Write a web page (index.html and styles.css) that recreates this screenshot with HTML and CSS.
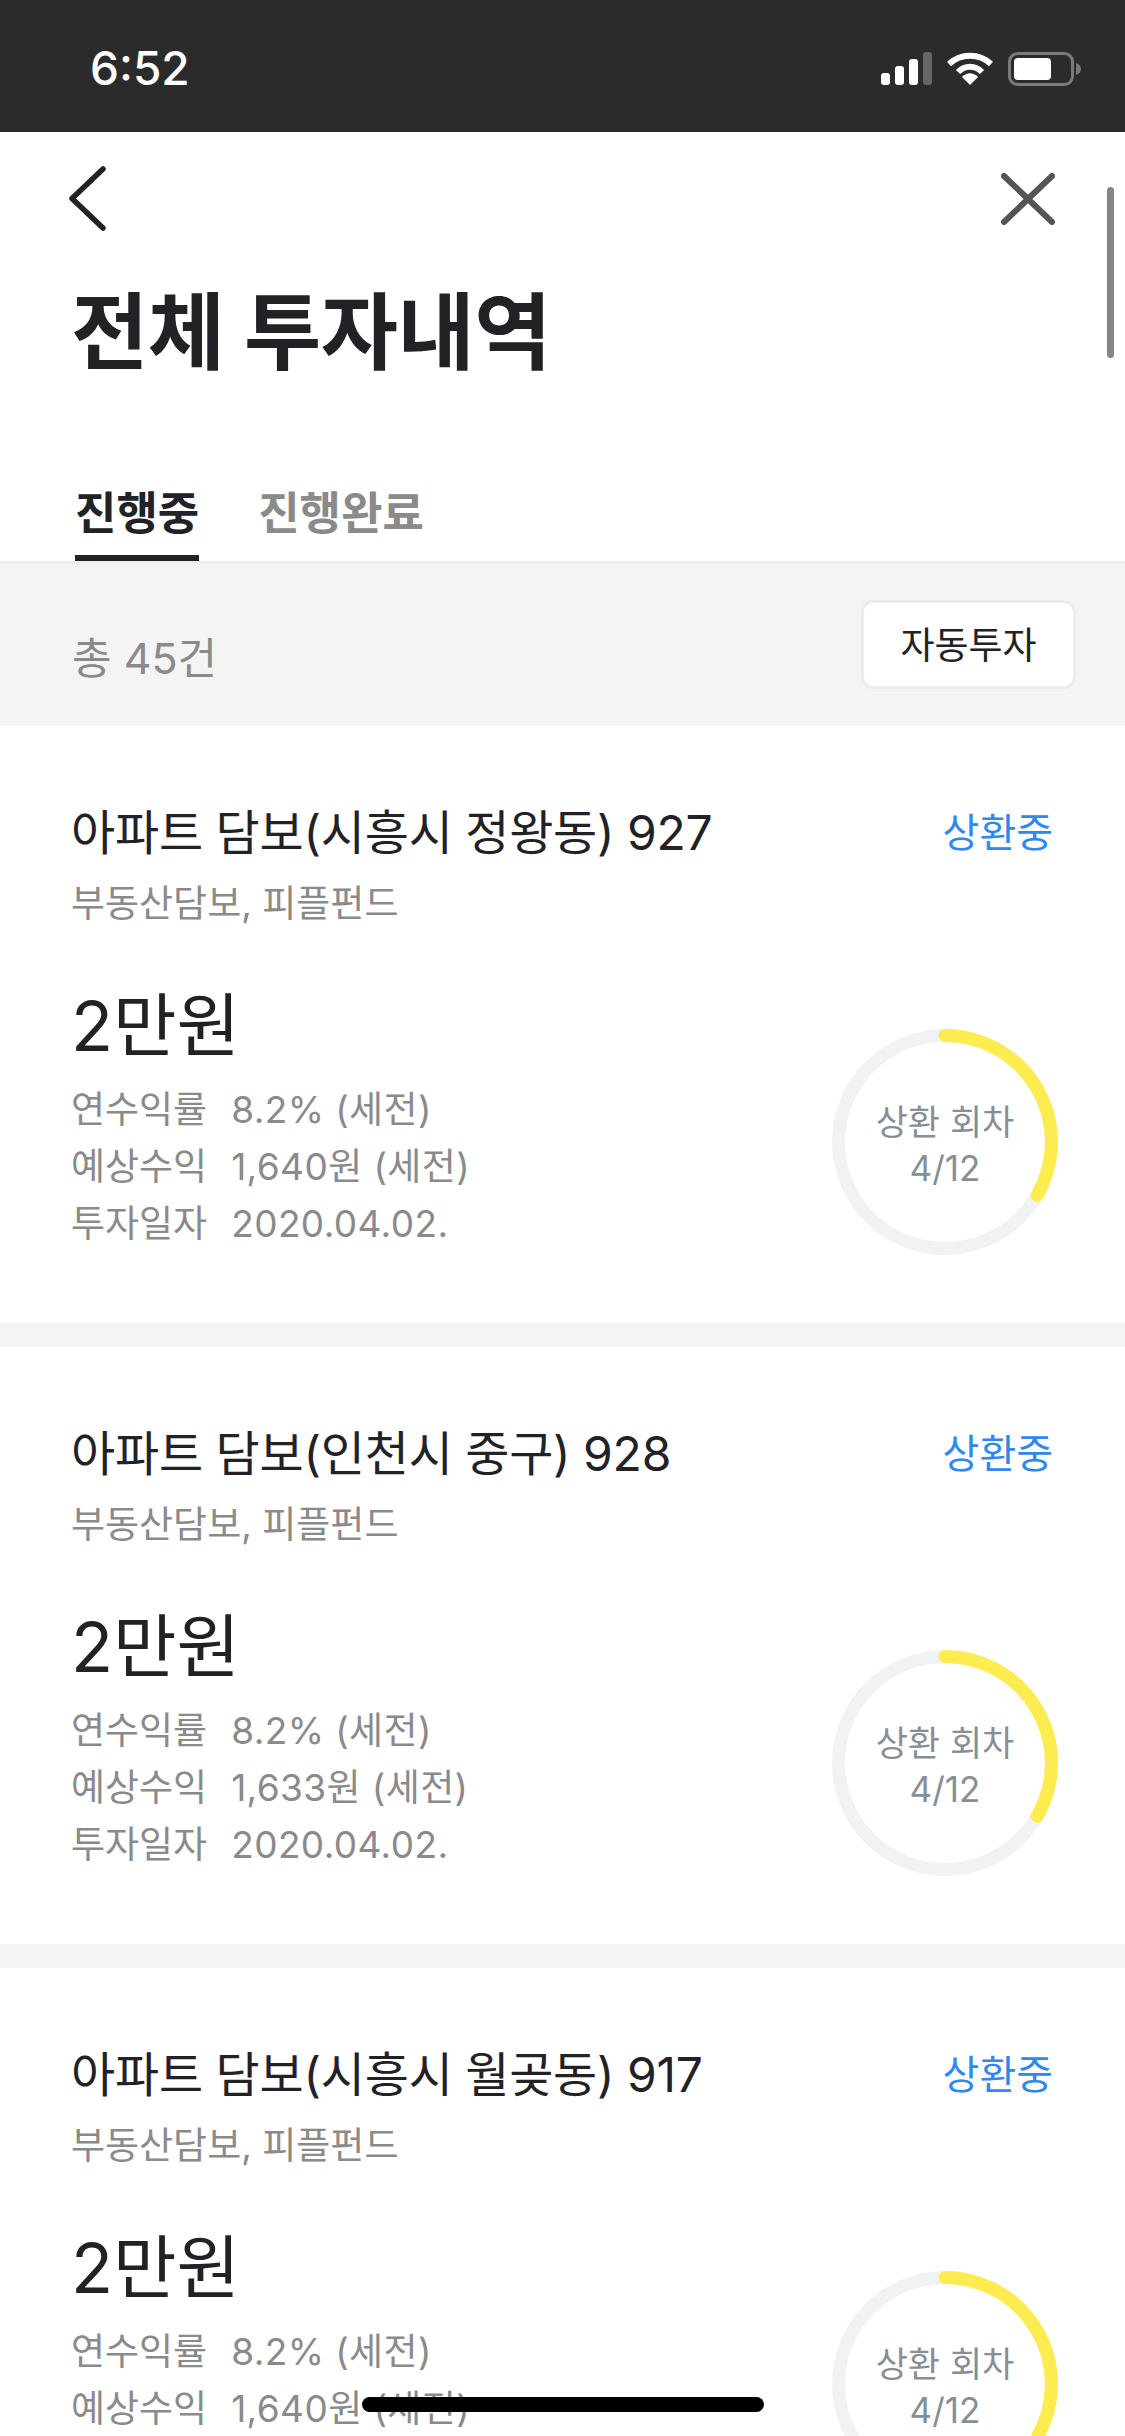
FILE: index.html
```html
<!DOCTYPE html>
<html lang="ko">
<head>
  <meta charset="UTF-8" />
  <meta name="viewport" content="width=device-width, initial-scale=1.0"/>
  <title>전체 투자내역</title>
  <link rel="stylesheet" href="styles.css">
</head>
<body>

<div class="statusbar">
  <span class="time">6:52</span>
  <div class="status-icons">
    <svg class="signal" width="51" height="33" viewBox="0 0 51 33">
      <rect x="0" y="21" width="9" height="12" rx="3" fill="#fff"/>
      <rect x="14" y="14" width="9" height="19" rx="3" fill="#fff"/>
      <rect x="28" y="7" width="9" height="26" rx="3" fill="#fff"/>
      <rect x="42" y="0" width="9" height="33" rx="3" fill="#666"/>
    </svg>
    <svg class="wifi" width="46" height="33" viewBox="0 0 46 33">
      <path d="M2 12 C14 1 32 1 44 12" fill="none" stroke="#fff" stroke-width="6"/>
      <path d="M11 20 C18 13 28 13 35 20" fill="none" stroke="#fff" stroke-width="6"/>
      <path d="M15 25 C20 20 26 20 31 25 L23 33 Z" fill="#fff"/>
    </svg>
    <svg class="battery" width="74" height="34" viewBox="0 0 74 34">
      <rect x="1.500" y="1.500" width="63" height="31" rx="8" fill="none" stroke="#7a7a7a" stroke-width="3"/>
      <rect x="6" y="6" width="37" height="22" rx="4" fill="#fff"/>
      <path d="M68 11 C71 12 73 14 73 17 C73 20 71 22 68 23 Z" fill="#7a7a7a"/>
    </svg>
  </div>
</div>

<div class="topnav">
  <svg width="37" height="65" viewBox="0 0 37 65">
    <path d="M34 3 L3 32.500 L34 62" fill="none" stroke="#222226" stroke-width="5.500" stroke-linecap="round" stroke-linejoin="round"/>
  </svg>
  <svg width="54" height="52" viewBox="0 0 54 52">
    <path d="M3 3 L51 49 M51 3 L3 49" fill="none" stroke="#555" stroke-width="6" stroke-linecap="round"/>
  </svg>
</div>

<h1 class="page-title">전체 투자내역</h1>

<div class="tabs">
  <div class="tab active">진행중</div>
  <div class="tab">진행완료</div>
</div>

<div class="summary">
  <span class="total">총 45건</span>
  <button class="auto-btn">자동투자</button>
</div>

<div class="cards">
  <div class="card">
    <div class="card-head">
      <span class="card-title">아파트 담보(시흥시 정왕동) 927</span>
      <span class="card-state">상환중</span>
    </div>
    <div class="card-sub">부동산담보, 피플펀드</div>
    <div class="card-body">
      <div>
        <div class="amount">2만원</div>
        <div class="info"><span>연수익률</span><span class="value">8.2% (세전)</span></div>
        <div class="info"><span>예상수익</span><span class="value">1,640원 (세전)</span></div>
        <div class="info"><span>투자일자</span><span class="value">2020.04.02.</span></div>
      </div>
      <div class="ring">
        <svg width="226" height="226" viewBox="0 0 226 226">
          <circle cx="113" cy="113" r="106.500" fill="none" stroke="#f1f2f4" stroke-width="13"/>
          <path d="M113 6.500 A106.500 106.500 0 0 1 205.200 166.200" fill="none" stroke="#fdec50" stroke-width="13" stroke-linecap="round"/>
        </svg>
        <div class="ring-text">상환 회차<br>4/12</div>
      </div>
    </div>
  </div>

  <div class="card">
    <div class="card-head">
      <span class="card-title">아파트 담보(인천시 중구) 928</span>
      <span class="card-state">상환중</span>
    </div>
    <div class="card-sub">부동산담보, 피플펀드</div>
    <div class="card-body">
      <div>
        <div class="amount">2만원</div>
        <div class="info"><span>연수익률</span><span class="value">8.2% (세전)</span></div>
        <div class="info"><span>예상수익</span><span class="value">1,633원 (세전)</span></div>
        <div class="info"><span>투자일자</span><span class="value">2020.04.02.</span></div>
      </div>
      <div class="ring">
        <svg width="226" height="226" viewBox="0 0 226 226">
          <circle cx="113" cy="113" r="106.500" fill="none" stroke="#f1f2f4" stroke-width="13"/>
          <path d="M113 6.500 A106.500 106.500 0 0 1 205.200 166.200" fill="none" stroke="#fdec50" stroke-width="13" stroke-linecap="round"/>
        </svg>
        <div class="ring-text">상환 회차<br>4/12</div>
      </div>
    </div>
  </div>

  <div class="card">
    <div class="card-head">
      <span class="card-title">아파트 담보(시흥시 월곶동) 917</span>
      <span class="card-state">상환중</span>
    </div>
    <div class="card-sub">부동산담보, 피플펀드</div>
    <div class="card-body">
      <div>
        <div class="amount">2만원</div>
        <div class="info"><span>연수익률</span><span class="value">8.2% (세전)</span></div>
        <div class="info"><span>예상수익</span><span class="value">1,640원 (세전)</span></div>
      </div>
      <div class="ring">
        <svg width="226" height="226" viewBox="0 0 226 226">
          <circle cx="113" cy="113" r="106.500" fill="none" stroke="#f1f2f4" stroke-width="13"/>
          <path d="M113 6.500 A106.500 106.500 0 0 1 205.200 166.200" fill="none" stroke="#fdec50" stroke-width="13" stroke-linecap="round"/>
        </svg>
        <div class="ring-text">상환 회차<br>4/12</div>
      </div>
    </div>
  </div>
</div>

<div class="scrollbar"></div>
<div class="home-bar"></div>

</body>
</html>
```

FILE: styles.css
```css
html, body {
  margin: 0;
  padding: 0;
}

body {
  position: relative;
  width: 1125px;
  height: 2436px;
  overflow: hidden;
  background-color: #fff;
  color: #222226;
  font-family: Inter, "Noto Sans CJK KR", sans-serif;
}

.statusbar {
  display: flex;
  justify-content: space-between;
  align-items: flex-start;
  height: 132px;
  padding: 0 43px 0 90px;
  background-color: #2b2b2b;
  box-sizing: border-box;
}

.time {
  margin-top: 41px;
  font-size: 46px;
  line-height: 54px;
  font-weight: 500;
  color: #fff;
}

.status-icons {
  display: flex;
  align-items: flex-start;
  gap: 15px;
  margin-top: 52px;
}

.topnav {
  display: flex;
  justify-content: space-between;
  align-items: center;
  height: 65px;
  padding: 34px 70px 0 69px;
}

.page-title {
  margin: 52px 0 0 71px;
  font-size: 84px;
  line-height: 100px;
  font-weight: 700;
  letter-spacing: -0.5px;
}

.tabs {
  display: flex;
  gap: 59px;
  height: 80px;
  margin-top: 98px;
  padding-left: 75px;
  border-bottom: 3px solid #efefef;
}

.tab {
  height: 74px;
  font-size: 45px;
  line-height: 66px;
  font-weight: 700;
  color: #8a8a8a;
}

.tab.active {
  color: #222226;
  border-bottom: 6px solid #222226;
}

.summary {
  display: flex;
  justify-content: space-between;
  align-items: flex-start;
  height: 162px;
  padding: 36px 49px 0 72px;
  background-color: #f4f4f5;
  box-sizing: border-box;
}

.total {
  margin-top: 28px;
  font-size: 43px;
  line-height: 60px;
  color: #8a8a8a;
}

.auto-btn {
  width: 215px;
  height: 89px;
  padding: 0 0 4px;
  background-color: #fff;
  border: 3px solid #ebecef;
  border-radius: 12px;
  font-family: inherit;
  font-size: 37px;
  color: #222226;
}

.cards {
  display: flex;
  flex-direction: column;
  gap: 24px;
  background-color: #f4f4f5;
}

.card {
  height: 597px;
  padding: 72px 72px 0 71px;
  background-color: #fff;
  box-sizing: border-box;
}

.card-head {
  display: flex;
  justify-content: space-between;
  align-items: center;
  height: 70px;
}

.card-title {
  font-size: 48px;
  line-height: 70px;
  letter-spacing: -0.2px;
  word-spacing: -0.7px;
}

.card-state {
  font-size: 40px;
  line-height: 70px;
  color: #2f87f0;
}

.card-sub {
  margin-top: 10px;
  font-size: 37px;
  line-height: 52px;
  color: #8a8a8a;
}

.card-body {
  display: flex;
  justify-content: space-between;
  align-items: flex-start;
  margin-top: 46px;
}

.amount {
  margin-bottom: 5px;
  font-size: 69px;
  line-height: 100px;
}

.info {
  display: flex;
  gap: 24px;
  font-size: 37px;
  line-height: 57px;
  color: #8a8a8a;
}

.info .value {
  letter-spacing: 0.4px;
}

.ring {
  display: grid;
  place-items: center;
  margin: 53px -5px 0 0;
}

.ring svg, .ring-text {
  grid-area: 1 / 1;
}

.ring-text {
  padding-top: 5px;
  font-size: 35px;
  line-height: 46px;
  text-align: center;
  color: #868e96;
}

.scrollbar {
  position: absolute;
  top: 187px;
  left: 1107px;
  width: 7px;
  height: 171px;
  border-radius: 4px;
  background-color: #868686;
}

.home-bar {
  position: absolute;
  top: 2397px;
  left: 362px;
  width: 402px;
  height: 15px;
  border-radius: 8px;
  background-color: #000;
}
```
